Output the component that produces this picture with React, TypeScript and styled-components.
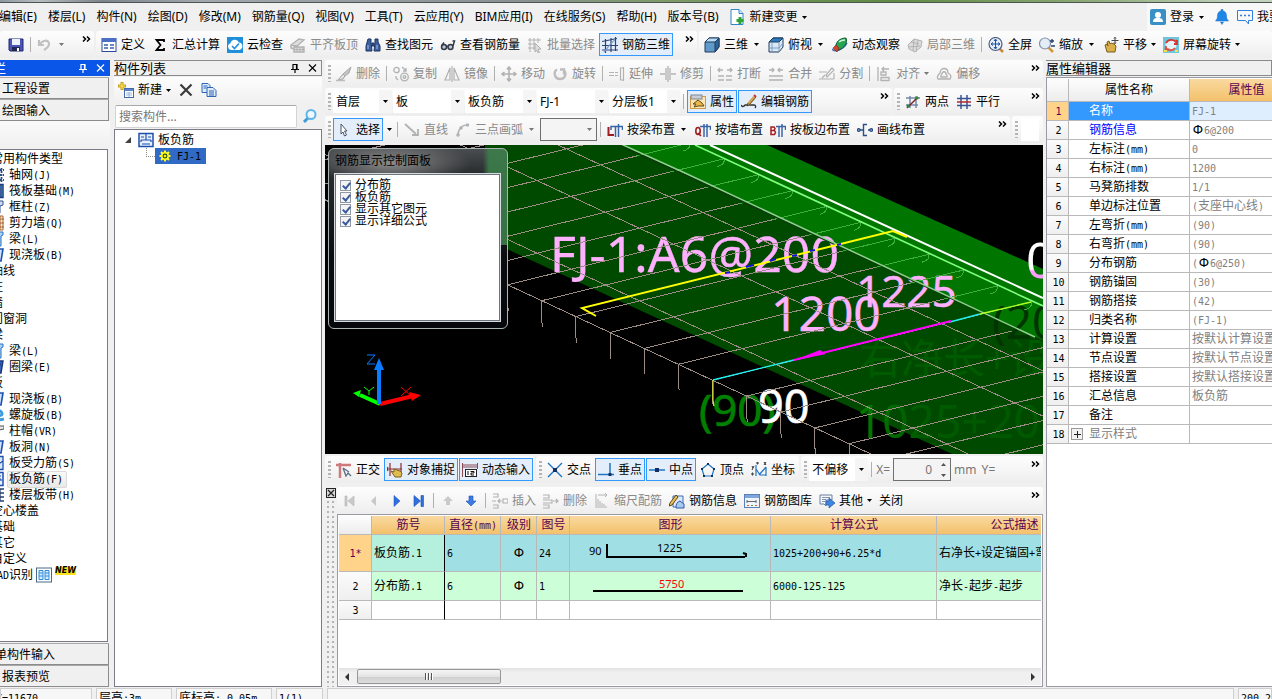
import React from 'react';
import styled, { createGlobalStyle, css } from 'styled-components';

const GlobalStyle = createGlobalStyle`
  * { box-sizing: border-box; }
  html, body { margin: 0; background: #f0f0f0; overflow: hidden; }
  body, button, input, select {
    font-family: "Noto Sans", "Noto Sans CJK SC", sans-serif;
    font-size: 12px;
    line-height: 16px;
    color: #000;
  }
  button { border: 0; background: none; padding: 0; margin: 0; }
  table { border-collapse: separate; border-spacing: 0; table-layout: fixed; }
`;

/* ---------- text helpers ---------- */

const MonoRun = styled.span`
  font-family: "DejaVu Sans Mono", "Liberation Mono", monospace;
  font-size: 10px;
`;
const PhiRun = styled.span`
  display: inline-block;
  width: 12px;
  text-align: center;
  color: #000;
  font-family: "DejaVu Sans", sans-serif;
  font-size: 12px;
  line-height: 12px;
`;

/* Latin runs take half the width of a Chinese character, as in a fixed-pitch form font. */
function Mixed({ children }: { children: string }) {
  const parts = children.split(/([\x20-\x7e]+|Φ)/).filter(Boolean);
  return (
    <>
      {parts.map((p, i) =>
        p === 'Φ' ? <PhiRun key={i}>Ф</PhiRun> : /^[\x20-\x7e]/.test(p) ? <MonoRun key={i}>{p}</MonoRun> : <span key={i}>{p}</span>,
      )}
    </>
  );
}

/* ---------- icons ---------- */

const G = '#b2b2b2';
const B = '#2b4f86';

const icons: Record<string, React.ReactNode> = {
  save: (
    <g>
      <path d="M1 2h14v12H2l-1-1z" fill="#4a55b8" stroke="#23296e" />
      <rect x="4" y="2" width="8" height="6" fill="#eef2ff" />
      <rect x="4" y="10" width="8" height="4" fill="#20264f" />
      <rect x="9" y="11" width="2" height="3" fill="#fff" />
    </g>
  ),
  undo: <path d="M2 3v5h5M2.500 8C5 3 12 2 12 7c0 3-2 4-5 6" fill="none" stroke="#c0c0c0" strokeWidth="2.2" />,
  define: (
    <g>
      <rect x="1" y="1.500" width="14" height="13" fill="#fff" stroke="#2c4a9c" />
      <rect x="1" y="1" width="14" height="4" fill="#4a6fc4" />
      <path d="M3 8h4M3 11h4M9 8h4M9 11h4" stroke="#3c5cae" strokeWidth="1.500" />
    </g>
  ),
  sigma: <path d="M12 5V3H4.500L8.500 8l-4 5H12v-2" fill="none" stroke="#000" strokeWidth="1.800" />,
  cloud: (
    <g>
      <rect width="16" height="16" fill="#1f8fdc" />
      <path d="M4 13a3.500 3.500 0 0 1-.5-6.800A4.500 4.500 0 0 1 12 5.500a3.800 3.800 0 0 1 .3 7.500z" fill="#fff" />
      <path d="M5 9l2.500 2.500L12 6.500" fill="none" stroke="#1f8fdc" strokeWidth="1.600" />
    </g>
  ),
  flat: (
    <g fill="none" stroke={G}>
      <path d="M1 8l8-6 5 1-7 6zM1 8v3l3 1M4 15v-5h10v5z" strokeWidth="1.400" fill="#dedede" />
      <path d="M4 12.500h10M7 10v5M10 10v5M13 10v5" />
    </g>
  ),
  find: (
    <g fill="#3d5f9e" stroke="#1d3565">
      <path d="M3 2h3v3l1 9H1V9zM10 2h3v3l2 4v5H9l1-9z" />
      <path d="M7 6h2v3H7z" />
      <path d="M3 8v4M12 8v4" stroke="#9fc0f0" />
    </g>
  ),
  glasses: (
    <g fill="none" stroke="#333a44" strokeWidth="1.500">
      <circle cx="4" cy="10" r="2.500" fill="#b8c6d8" />
      <circle cx="10.500" cy="10" r="2.500" fill="#b8c6d8" />
      <path d="M6.500 9.500H8M13 9l1.500-5h-2M1.500 9L4 5.500" />
    </g>
  ),
  batch: (
    <g fill="none" stroke={G}>
      <path d="M1 3h13M1 7h7M1 11h7M3 1v14M7 1v12M11 1v5" />
      <path d="M8 6l6 6-3 .3 1.500 3-1.500.700-1.500-3L8 15z" fill="#ddd" />
    </g>
  ),
  rebar3d: (
    <g fill="none" stroke="#2b4472" strokeWidth="1.200">
      <path d="M0 4.500l15-3M0 8.500h16M0 13h16M3.500 2v14M9 1v14M13.500 0v14" />
      <path d="M2 15C6 11 8 6 13 3" stroke="#7a9bd6" />
    </g>
  ),
  cube: (
    <g stroke="#1e3a5c">
      <path d="M1 5l4-4h10v9l-4 5H1z" fill="#5f9acb" />
      <path d="M1 5l4-4h10l-4 4z" fill="#b8dcf4" />
      <path d="M11 5l4-4v9l-4 5z" fill="#2e6596" />
    </g>
  ),
  top: (
    <g stroke="#1e3a5c">
      <path d="M1 5l4-4h10v9l-4 5H1z" fill="#d8e8f6" />
      <path d="M1 5l4-4h10l-4 4z" fill="#2d7cc0" />
      <path d="M11 5v10M4 6v8M1 11h10M11 11l4-5" stroke="#7f9fc0" />
    </g>
  ),
  orbit: (
    <g>
      <path d="M0 12c3 4 12 0 15-6" fill="none" stroke="#4a70b8" strokeWidth="1.500" />
      <path d="M4 11C3 5 8 1 14 1c2 5-2 10-7 12z" fill="#25a552" stroke="#0d5d2b" />
      <path d="M7 5c2-2 4-2 6-2" stroke="#c8f5d4" strokeWidth="1.500" fill="none" />
      <path d="M1 11l3-3 3 3-2 4z" fill="#cf4630" stroke="#7d1d10" strokeWidth=".6" />
    </g>
  ),
  local3d: (
    <g fill="#dcdcdc" stroke={G}>
      <path d="M1 8l6-6 8 2-1 6-6 5-6-3z" />
      <path d="M4 5l8 2M7 2l-1 12M11 3L9 15M2 10l11-1" fill="none" />
    </g>
  ),
  full: (
    <g>
      <path d="M11 11l4 4" stroke="#c88a3a" strokeWidth="2.500" />
      <circle cx="7.500" cy="7" r="6.500" fill="#e6eef8" stroke="#4a5f80" strokeWidth="1.200" />
      <path d="M7.500 2.500v9M3 7h9M6 4l1.500-2L9 4M6 10l1.500 2L9 10M5 5.500L3 7l2 1.500M10 5.500L12 7l-2 1.500" stroke="#1f4f9c" fill="none" />
    </g>
  ),
  zoom: (
    <g>
      <path d="M9 10l5 5" stroke="#d09a3a" strokeWidth="2.500" />
      <circle cx="6" cy="6.500" r="5.500" fill="#e4edf7" stroke="#8492a8" strokeWidth="1.200" />
      <path d="M13 2v4M11 4h4M12 9h4" stroke="#24406e" strokeWidth="1.300" />
    </g>
  ),
  pan: (
    <g>
      <path d="M2 8l2-1 1 2-1-4 2-1 1 3 1-1 3 1 2 2-1 6H4z" fill="#d9b04a" stroke="#7a5c1c" />
      <path d="M12 0v7M8.500 3.500h7M11 1.500l1-1 1 1M11 5.500l1 1 1-1" stroke="#444" fill="none" />
    </g>
  ),
  screenRot: (
    <g>
      <rect width="16" height="16" fill="#6ec6de" />
      <circle cx="8" cy="8" r="5.500" fill="#fff" opacity=".8" />
      <path d="M3 6c2-4 8-4 10-1l1-2M14 3v4h-3" fill="none" stroke="#d8342c" strokeWidth="1.800" />
      <path d="M12 11c-2 3-7 3-9 0M3 9l-.5 4 4-1" fill="none" stroke="#e0503c" strokeWidth="1.800" />
      <path d="M1 13h3v2H1zM12 13h3v2h-3z" fill="#f2e14a" />
    </g>
  ),
  newdoc: (
    <g>
      <path d="M1 .500h8l4 4v11H1z" fill="#fff" stroke="#2d86c8" />
      <path d="M9 .500v4h4" fill="#cbe6f8" stroke="#2d86c8" />
      <path d="M10 8v7M6.500 11.500h7" stroke="#2ea336" strokeWidth="3" />
    </g>
  ),
  user: (
    <g>
      <rect width="16" height="16" rx="2" fill="#3a8fc4" />
      <circle cx="8" cy="6" r="3" fill="#fff" />
      <path d="M3 13c0-4 3-4 5-4s5 0 5 4z" fill="#fff" />
    </g>
  ),
  bell: <path d="M7 .500h2V2c3 .5 3.500 3 3.500 5s.5 3 2 5h-13c1.500-2 2-3 2-5S4 2.500 7 2zM6.500 13h3L8 15.500z" fill="#1f86e8" stroke="#1f6fc8" strokeWidth=".5" />,
  chat: (
    <g fill="none" stroke="#2f7fe0">
      <path d="M.500 1.500h15v10h-4v3.500l-3-3.500h-8z" />
      <path d="M3 6.500h2M7 6.500h2M11 6.500h2" strokeWidth="1.500" />
    </g>
  ),
  brush: (
    <g>
      <path d="M15 1l-2 6-4 3-2-2z" fill="#c4c4c4" stroke="#a8a8a8" />
      <path d="M7 8l2 2-2 3-5 1z" fill="#e0e0e0" stroke="#a8a8a8" />
      <path d="M0 14.500h9" stroke="#bcbcbc" strokeWidth="1.500" />
    </g>
  ),
  copyShape: (
    <g fill="none" stroke={G} strokeWidth="1.300">
      <circle cx="3.500" cy="4" r="2.700" />
      <circle cx="11.500" cy="11" r="3.800" />
      <circle cx="11.500" cy="11" r="1.300" />
      <path d="M9 1l4 3.500M13 2v3h-3M3 10v2l2 2" />
    </g>
  ),
  mirror: <path d="M6 2v12H1zM10 2v12h5zM8 0v16" fill="none" stroke={G} strokeWidth="1.200" />,
  move: <path d="M8 1v14M1 8h14M6 3.500L8 1l2 2.500M6 12.500L8 15l2-2.500M3.500 6L1 8l2.500 2M12.500 6L15 8l-2.500 2" fill="none" stroke={G} strokeWidth="1.600" />,
  rotate: <path d="M5 3.500C1 6 2.500 13 8 13s7-6 3.500-9M12 8.500V3.500H8" fill="none" stroke="#bdbdbd" strokeWidth="2.400" />,
  extend: <path d="M0 6.500h5M0 9.500h5M6 6.500h3M6 9.500h3M11.500 2v12M14.500 1v14M11 2h4M11 14h4" fill="none" stroke={G} strokeWidth="1.200" />,
  trim: <path d="M0 8h5M11 8h5M6 2v12M10 2v12M8 0v16" fill="none" stroke={G} strokeWidth="1.300" />,
  breakIcon: <path d="M1 4h5M3 2L1 4l2 2M10 4h5M13 2l2 2-2 2M1 10h6M1 14h6M9 10h6M9 14h6" fill="none" stroke={G} strokeWidth="1.300" />,
  merge: <path d="M1 4h5M4 2l2 2-2 2M10 4h5M12 2l-2 2 2 2M1 10h14M1 14h14" fill="none" stroke={G} strokeWidth="1.300" />,
  splitIcon: <path d="M0 6h8M0 13h15M3 12l3-3M13 2l-6 7 1 2 7-7zM15 7v6" fill="none" stroke={G} strokeWidth="1.200" />,
  align: <path d="M2 1v14M5 6h5v3H5zM5 11.500h8v3H5zM13 3H6M8 1L6 3l2 2" fill="none" stroke={G} strokeWidth="1.300" />,
  offset: (
    <g fill="none" stroke={G} strokeWidth="1.300">
      <path d="M2 13c-2-3 1-5 2-6 0-6 8-6 8 0 2 1 4 3 2 6z" />
      <path d="M5 11c-1-2 1-2 1-3 0-3 4-3 4 0 0 1 2 1 1 3z" />
    </g>
  ),
  prop: (
    <g>
      <rect x=".500" y="2.500" width="15" height="12" fill="#fbe6b4" stroke="#d49b3e" />
      <rect x="1" y="1" width="11" height="4" fill="#c8ccd4" stroke="#7d8798" />
      <path d="M3 10l5-4 4 3 2 3H8l-4 1 2-3z" fill="#e9b949" stroke="#5f4a1c" />
    </g>
  ),
  editRebar: (
    <g fill="none">
      <path d="M0 11c1 2 3 2 4 0h9c2 0 2 2 1 3" stroke="#333" strokeWidth="1.300" />
      <path d="M13.500 3L7 10.500" stroke="#d2a34a" strokeWidth="3" />
      <path d="M15 3L8 11l-2 1 1-3" stroke="#5d3b1e" strokeWidth=".8" />
      <path d="M13 1l2 2" stroke="#c33" strokeWidth="2" />
    </g>
  ),
  twoPoint: (
    <g fill="none">
      <path d="M5 2v12M11 2v12M1 4h14M1 11h12" stroke="#7387ad" strokeWidth="1.500" />
      <path d="M2 14L13 3" stroke="#7c2020" strokeWidth="1.500" />
      <circle cx="12" cy="4" r="1.500" fill="#2d8a2d" />
      <circle cx="3" cy="12" r="1.500" fill="#2d8a2d" />
    </g>
  ),
  parallel: (
    <g fill="none" strokeWidth="1.500">
      <path d="M5 1v14M11 1v14M1 11.500h14" stroke="#3a5590" />
      <path d="M1 8h14" stroke="#b02a2a" />
      <path d="M1 4.500h14" stroke="#3a5590" />
    </g>
  ),
  pointer: <path d="M5 2l6 7H8.500l2 4-2 1-1.500-4-2 2z" fill="#fff" stroke="#4a5568" />,
  lineTool: <path d="M1 2l11 10M14 7v6H8" fill="none" stroke={G} strokeWidth="1.800" />,
  arcTool: (
    <g fill="none" stroke={G} strokeWidth="1.600">
      <path d="M3 13C3 7 7 3 12 3" />
      <circle cx="3" cy="13" r="1" />
      <circle cx="12.500" cy="3" r="1" />
      <circle cx="6" cy="6" r="1" />
    </g>
  ),
  beamL: (
    <g fill="none">
      <path d="M1.500 5v8H7" stroke="#a11c1c" strokeWidth="2" />
      <path d="M4 8V4.500h11.500V8M8.500 4v11M11.500 2v13" stroke="#3b64a8" strokeWidth="1.500" />
    </g>
  ),
  beamQ: (
    <g fill="none">
      <ellipse cx="3" cy="9" rx="2.200" ry="3.500" stroke="#a11c1c" strokeWidth="1.600" />
      <path d="M3 11l3 3" stroke="#a11c1c" strokeWidth="1.600" />
      <path d="M5 4.500h10.500V8M9 2v13M12 2v13" stroke="#3b64a8" strokeWidth="1.500" />
    </g>
  ),
  beamB: (
    <g fill="none">
      <path d="M1 5h3l1 1.500L4 8.500H1zM1 8.500h3.500l1 2-1 2H1z" stroke="#a11c1c" strokeWidth="1.500" />
      <path d="M6 4.500h9.500V8M9 4v11M12 2v13" stroke="#3b64a8" strokeWidth="1.500" />
    </g>
  ),
  drawLine: (
    <g fill="none" stroke="#2b4f86" strokeWidth="1.400">
      <circle cx="1.800" cy="8" r="1.300" />
      <circle cx="14.200" cy="8" r="1.300" />
      <path d="M3 8h3M11 8h2M10 2.500H6.500v11H10" />
    </g>
  ),
  ortho: (
    <g fill="none">
      <path d="M0 3h15M4 1v15" stroke="#cf7a7a" strokeWidth="2.500" />
      <path d="M7 6l3 8 2-3 3 3M7 6l6 4" stroke="#5c6e86" strokeWidth="1.300" />
    </g>
  ),
  snap: (
    <g fill="none">
      <path d="M3 1v13M14 1v9M0 7h15M1 5l-1 2 1 2" stroke="#8d2b2b" strokeWidth="1.200" />
      <path d="M4 9l3 1V7l6 2 2 2-1 4H8z" fill="#e0bc4e" stroke="#7c611e" />
    </g>
  ),
  dynIn: (
    <g fill="none">
      <path d="M.500 1v14M15.500 1v6M1 3h14M1 5h14" stroke="#8a4a55" />
      <rect x="3.500" y="7.500" width="11" height="7" fill="#fff" stroke="#222" />
      <path d="M6 9v4M8.500 9.500H12v1.500H9V13h3" stroke="#111" />
    </g>
  ),
  cross: (
    <g>
      <path d="M1 1l14 14M15 1L1 15" stroke="#1f74c4" strokeWidth="1.400" />
      <rect x="6" y="6" width="4" height="4" fill="#112f66" />
    </g>
  ),
  perp: (
    <g>
      <path d="M0 12.500h16M12 1v11" stroke="#1f74c4" strokeWidth="1.500" />
      <rect x="10.500" y="11" width="3" height="3" fill="#112f66" />
    </g>
  ),
  mid: (
    <g>
      <path d="M0 8h16" stroke="#1f74c4" strokeWidth="1.500" />
      <rect x="6" y="6" width="4" height="4" fill="#112f66" />
    </g>
  ),
  vertex: (
    <g>
      <path d="M8 2l6 5-2 7H4L2 7z" fill="none" stroke="#1f74c4" strokeWidth="1.200" />
      <path d="M7 1h2v2H7zM13 6h2v2h-2zM1 6h2v2H1zM3 13h2v2H3zM11 13h2v2h-2z" fill="#112f66" />
    </g>
  ),
  coord: (
    <g fill="none" stroke="#1f74c4">
      <path d="M5 3v11M8 13l7-8M15 5v9M5 7l4 6M9 13h6" strokeWidth="1.200" />
      <path d="M13 0l2 3M15 0l-2 3M1 4l1 2M3 4L1 8M1 11h1v2H1zM6 0h1v2H6z" stroke="#333" />
    </g>
  ),
  first: <path d="M3 3h2v10H3zM12 3L6 8l6 5z" fill="#cacaca" stroke="#b4b4b4" strokeWidth=".6" />,
  prev: <path d="M11 3L6 8l5 5z" fill="#c8c8c8" />,
  next: <path d="M6 2.500L12 8l-6 5.500z" fill="#2f6fe0" stroke="#1c4fb4" strokeWidth=".5" />,
  last: <path d="M3 2.500L9.500 8 3 13.500zM10 2.500h2.500v11H10z" fill="#2f6fe0" stroke="#1c4fb4" strokeWidth=".6" />,
  up: <path d="M8 3l5 5h-3v4H6V8H3z" fill="#cacaca" />,
  down: <path d="M8 13l5-5h-3V3H6v5H3z" fill="#3b7be6" stroke="#1e50b0" strokeWidth=".6" />,
  insert: <path d="M1 1h5v3H1M1 12h5v3H1M0 8h4M6 8h4M8 6L6 8l2 2M11 6h5v4h-5z" fill="none" stroke={G} strokeWidth="1.200" />,
  remove: <path d="M0 2h6v3H0M0 7h9v3H0M0 12h6v3H0M10 8h5M13 6l2 2-2 2" fill="none" stroke={G} strokeWidth="1.200" />,
  scaleBar: <path d="M2 1v14M4 2h9M11 0l2 2-2 2M4 6v9M6 8v7M8 10v5M10 11v4M12 13v2" fill="none" stroke={G} />,
  info: (
    <g>
      <path d="M4 3h10v11H4z" fill="#dbe8f8" stroke="#3f6fb4" />
      <path d="M7 15c0-4 1-6 4-7l4 3v4z" fill="#a8c8ee" stroke="#2f5da8" />
      <path d="M1 10L7 2l2 2-6 8-3 1z" fill="#e9c25a" stroke="#5f4413" />
    </g>
  ),
  library: (
    <g>
      <rect x=".500" y="1.500" width="15" height="13" fill="#eef4fc" stroke="#5b7fb8" />
      <rect x="1" y="2" width="14" height="3" fill="#7fa6dc" />
      <path d="M3 10V7M3 8.500h9v1.500M12 7v2" stroke="#666" fill="none" />
      <path d="M3 12.500h2M11 12.500h2" stroke="#d05a3a" />
      <path d="M7 12.500h2" stroke="#5aa04a" />
    </g>
  ),
  other: (
    <g>
      <path d="M1 2h12v5H7v6l-2-2H1z" fill="#f3f6fb" stroke="#6c7f9c" />
      <path d="M3 4.500h8M3 6.500h4M3 8.500h3" stroke="#8898b0" />
      <path d="M7 8h3V5l6 5-6 5v-3H7z" fill="#3f86e0" stroke="#1f56a8" strokeWidth=".7" />
    </g>
  ),
  create: (
    <g>
      <path d="M4 0v8M0 4h8" stroke="#c8a018" strokeWidth="3" />
      <path d="M4 1v6M1 4h6" stroke="#ffe95a" />
      <rect x="6.500" y="6.500" width="9" height="9" fill="#fff" stroke="#4668a8" />
      <rect x="7" y="7" width="8" height="2" fill="#5a86cf" />
      <path d="M8 11h6M8 13h6M11 10v5" stroke="#9db6dd" />
    </g>
  ),
  del: <path d="M2.500 2.500l11 11M13.500 2.500l-11 11" stroke="#3b3b3b" strokeWidth="2.200" />,
  dup: (
    <g fill="#dcecfb" stroke="#2f64b4">
      <path d="M1 1.500h6l2 2v7H1z" />
      <path d="M6 5.500h6l3 3v6H6z" />
      <path d="M2.500 4h4M2.500 6h3M8 9h5M8 11h5M8 13h5" />
    </g>
  ),
  search: (
    <g fill="none">
      <path d="M6 10l-4 4" stroke="#3b9bdc" strokeWidth="3" />
      <circle cx="9" cy="6.500" r="4.500" stroke="#62b4ea" strokeWidth="2" fill="#eef8ff" />
    </g>
  ),
  slab: (
    <g>
      <rect x="1" y="1.500" width="14" height="13" fill="#e7f0fd" stroke="#1f4fae" strokeWidth="1.500" />
      <path d="M8 2v6M3 8h10M3 8v2M13 8v2M4 12h8M3 5h3M10 5h3" stroke="#1f4fae" strokeWidth="1.200" fill="none" />
    </g>
  ),
  gear: (
    <g stroke="#ffff20" fill="none">
      <path d="M8 2.500v11M2.500 8h11M4 4l8 8M12 4l-8 8" strokeWidth="2" />
      <circle cx="8" cy="8" r="3.200" fill="#1d3c12" strokeWidth="1.500" />
      <circle cx="8" cy="8" r="1" fill="#ffff20" />
    </g>
  ),
  axis: <path d="M0 3h16M0 8h16M0 13h16M4 1v14M13.500 1v14" fill="none" stroke={B} strokeDasharray="2 1" strokeWidth="1.800" />,
  raft: <path d="M1 1.500h14v13H1zM4 5h8M4 8h8M4 11h8M13 2v12" fill="#9cc6f2" stroke="#173f7e" strokeWidth="1.500" />,
  column: <path d="M2 2h13v4l-3 1v7H6V7L2 6z" fill="#cfdcf0" stroke="#33558f" />,
  wall: <path d="M4 1h11v14H4zM12 4h4M12 8h4M12 12h4M12 1v14" fill="#f7ead8" stroke="#a8622a" />,
  beam: <path d="M4 5l4-4h7v3l-2 1v10H8V6z" fill="#a9d4f8" stroke="#2a6fc0" />,
  floor: <path d="M5 2h10l-2 12H2z" fill="#cfe4fb" stroke="#1d50b0" strokeWidth="1.600" />,
  ring: <path d="M5 2h10l-2 12H2zM8 5h4l-2 6H7z" fill="#3a62b8" stroke="#16347c" strokeWidth="1.400" />,
  spiral: <path d="M2 4c5-4 12 0 12 3s-8 1-8 3 5 4 10 2" fill="none" stroke="#3d9be0" strokeWidth="3" />,
  cap: <path d="M1 3h15v3l-5 1v7H6V7L1 6z" fill="#e6e6e6" stroke="#555" />,
  bars: <path d="M1 1.500h14v13H1zM4 6l5 4 6-4" fill="#d8e8fb" stroke="#1f4fae" strokeWidth="1.300" />,
  band: <path d="M1 2h15M4 2v12M12 2v12M4 6h12M4 10h12M1 14h15" fill="none" stroke="#27406e" strokeWidth="1.300" />,
  cad: (
    <g>
      <rect x=".500" y="1" width="15" height="14" fill="#fff" stroke="#4a6a86" />
      <path d="M3 3.500h4v9H3zM9 3.500h4v9H9zM3 6h4M3 9h4M9 6h4M9 9h4" fill="#d6ecff" stroke="#2f8bd8" />
    </g>
  ),
};

const IconSvg = styled.svg`
  flex: none;
  display: block;
`;
const Icon = ({ name }: { name: string }) => (
  <IconSvg width="16" height="16" viewBox="0 0 16 16" aria-hidden="true">
    {icons[name]}
  </IconSvg>
);
const Triangle = ({ dim }: { dim?: boolean }) => (
  <IconSvg width="5" height="3" viewBox="0 0 5 3" aria-hidden="true">
    <path d="M0 0h5L2.500 3z" fill={dim ? '#777' : '#000'} />
  </IconSvg>
);

/* ---------- toolbars ---------- */

const Row = styled.div<{ $flush?: boolean }>`
  display: flex;
  gap: 2px;
  height: 27px;
  flex: none;
  margin-bottom: ${(p) => (p.$flush ? 0 : 1)}px;
`;
const Bar = styled.div<{ $grow?: boolean; $w?: number; $lead?: number }>`
  display: flex;
  align-items: center;
  gap: 1px;
  min-width: 0;
  flex: ${(p) => (p.$grow ? '1 1 0' : p.$w ? `0 0 ${p.$w}px` : 'none')};
  padding: 0 1px 0 ${(p) => p.$lead ?? 2}px;
  overflow: hidden;
  border-radius: 3px;
  background: linear-gradient(#fdfdfd, #f6f6f6 50%, #ededed);
`;
const Grip = styled.span`
  flex: none;
  width: 3px;
  height: 17px;
  margin: 0 1px;
  background: repeating-linear-gradient(#b4b4b4 0 2px, transparent 2px 4px);
`;
const Divider = styled.span`
  flex: none;
  width: 1px;
  height: 15px;
  margin: 0 2px;
  background: #b0b0b0;
`;
const BlankField = styled.span`
  flex: 1;
  height: 23px;
  margin: 0 3px 0 1px;
  background: #fff;
`;
const ToolBtn = styled.button<{ $on?: boolean; $arrow?: 'wide' | 'narrow' }>`
  flex: none;
  display: flex;
  align-items: center;
  gap: 4px;
  height: 23px;
  padding: 0 ${(p) => (p.$arrow ? 0 : 3)}px 0 3px;
  white-space: nowrap;
  &:disabled { color: #8a8a8a; }
  ${(p) =>
    p.$on &&
    css`
      background: #e3eefa;
      box-shadow: inset 0 0 0 1px #3399ff;
    `}
`;
const ArrowBox = styled.span<{ $wide?: boolean }>`
  display: flex;
  justify-content: center;
  width: ${(p) => (p.$wide ? 16 : 12)}px;
  margin-left: -4px;
`;
const LoneArrow = styled.button`
  flex: none;
  display: flex;
  align-items: center;
  justify-content: center;
  width: 10px;
  height: 23px;
`;
const MoreBtn = styled.button`
  flex: none;
  align-self: flex-start;
  margin: 5px 2px 0 auto;
  display: block;
`;
const More = () => (
  <MoreBtn aria-label="更多">
    <IconSvg width="9" height="6" viewBox="0 0 9 6" aria-hidden="true">
      <path d="M1 .500L3.500 3 1 5.500M5 .500L7.500 3 5 5.500" fill="none" stroke="#000" strokeWidth="1.500" />
    </IconSvg>
  </MoreBtn>
);

interface ToolProps {
  icon?: string;
  label?: string;
  title?: string;
  on?: boolean;
  off?: boolean;
  arrow?: 'wide' | 'narrow';
}
const Tool = ({ icon, label, title, on, off, arrow }: ToolProps) => (
  <ToolBtn $on={on} $arrow={arrow} disabled={off} aria-label={label ?? title}>
    {icon && <Icon name={icon} />}
    {label && <span>{label}</span>}
    {arrow && (
      <ArrowBox $wide={arrow === 'wide'}>
        <Triangle dim={off} />
      </ArrowBox>
    )}
  </ToolBtn>
);

const PickWrap = styled.span<{ $w: number; $boxed?: boolean }>`
  flex: none;
  display: flex;
  align-items: center;
  position: relative;
  width: ${(p) => p.$w}px;
  height: 23px;
  background: ${(p) => (p.$boxed ? '#f4f4f4' : 'linear-gradient(90deg, #fff calc(100% - 13px), #f5f5f5 calc(100% - 13px))')};
  border: ${(p) => (p.$boxed ? '1px solid #6e6e6e' : '0')};
  & > svg { position: absolute; right: 4px; pointer-events: none; }
  & > select {
    appearance: none;
    width: 100%;
    height: 100%;
    border: 0;
    padding: 0 12px 0 3px;
    background: transparent;
  }
`;
const Pick = ({ value, label, w, boxed }: { value: string; label: string; w: number; boxed?: boolean }) => (
  <PickWrap $w={w} $boxed={boxed}>
    <select aria-label={label} defaultValue={value}>
      <option>{value}</option>
    </select>
    <Triangle dim={boxed} />
  </PickWrap>
);

/* ---------- page frame ---------- */

const Shell = styled.div`
  display: flex;
  flex-direction: column;
  height: 100vh;
  overflow: hidden;
  background: #f0f0f0;
`;
const DesktopStrip = styled.div`
  flex: none;
  height: 3px;
  border-bottom: 1px solid #4c5650;
  background: linear-gradient(90deg, #8f97a0, #b8bcc0 3%, #7d848c 8%, #a2a8ae 16%, #8b9095 40%, #7d9a68 52%, #5f8a44 70%, #87a56f 84%, #c4d3c0 98%);
`;
const MenuBar = styled.nav`
  flex: none;
  display: flex;
  align-items: center;
  height: 28px;
  overflow: hidden;
  margin-left: -6px;
`;
const MenuItem = styled.button`
  flex: none;
  display: flex;
  align-items: center;
  gap: 4px;
  padding: 0 6px 0 5px;
  height: 24px;
  white-space: nowrap;
`;
const Account = styled.div`
  flex: none;
  display: flex;
  align-items: center;
  gap: 1px;
  margin: 0 -12px 0 auto;
  height: 28px;
  background: #f8f8f8;
`;
const Main = styled.div`
  flex: 1;
  min-height: 0;
  display: flex;
  gap: 3px;
  padding-bottom: 1px;
`;
const PanelTitle = styled.header<{ $active?: boolean }>`
  flex: none;
  display: flex;
  align-items: center;
  justify-content: space-between;
  height: 16px;
  margin: 1px 0;
  font-size: 13px;
  line-height: 14px;
  white-space: nowrap;
  overflow: hidden;
  border: 1px solid ${(p) => (p.$active ? '#0a56e8' : '#8a8a8a')};
  border-left: 0;
  background: ${(p) => (p.$active ? '#0a56e8' : '#f0f0f0')};
  color: ${(p) => (p.$active ? '#fff' : '#000')};
`;
const TitleButtons = styled.span`
  display: flex;
  gap: 8px;
  padding-right: 4px;
  & > button { color: inherit; display: block; }
`;
const PinClose = () => (
  <TitleButtons>
    <button aria-label="固定">
      <IconSvg width="10" height="10" viewBox="0 0 10 10">
        <path d="M3 1.500h4v5H3zM6.500 1v5M1 6.500h8M5 7v3" fill="none" stroke="currentColor" strokeWidth="1.200" />
      </IconSvg>
    </button>
    <button aria-label="关闭面板">
      <IconSvg width="9" height="10" viewBox="0 0 9 10">
        <path d="M1 1.500l7 7M8 1.500l-7 7" fill="none" stroke="currentColor" strokeWidth="1.100" />
      </IconSvg>
    </button>
  </TitleButtons>
);

/* ---------- navigation panel ---------- */

const NavPanel = styled.aside`
  flex: none;
  width: 110px;
  display: flex;
  flex-direction: column;
`;
const ClippedTitle = styled.span`
  margin-left: -59px;
`;
const NavButton = styled.button`
  flex: none;
  height: 21px;
  margin: 1px 1px 0 0;
  padding: 2px 0 0 2px;
  text-align: left;
  white-space: nowrap;
  border: solid #8c8c8c;
  border-width: 0 1px 1px 0;
  background: #f0f0f0;
  box-shadow: 0 -1px 0 #a8a8a8;
`;
const NavSpacer = styled.div`
  flex: none;
  height: 28px;
  background: linear-gradient(#fafafa, #f0f0f0);
`;
const NavTree = styled.ul`
  flex: 1;
  min-height: 0;
  margin: 0 2px 1px 0;
  padding: 1px 0 0;
  list-style: none;
  overflow: hidden;
  background: #fff;
  border: 1px solid #7c7c88;
  border-left: 0;
`;
const NavNode = styled.li<{ $leaf?: boolean }>`
  display: flex;
  align-items: center;
  gap: 3px;
  height: 16px;
  margin-left: ${(p) => (p.$leaf ? -12 : -9)}px;
  white-space: nowrap;
`;
const NodeText = styled.span<{ $on?: boolean }>`
  padding: 0 4px 0 2px;
  ${(p) =>
    p.$on &&
    css`
      background: linear-gradient(#fafafa, #e8e8e8);
      border-radius: 2px;
      box-shadow: inset 0 0 0 1px #dadada;
    `}
`;
const NewTag = styled.b`
  align-self: flex-start;
  font: italic 700 8px/8px "DejaVu Sans", sans-serif;
  background: #ffe21a;
`;

const navItems: { t: string; icon?: string; on?: boolean }[] = [
  { t: '常用构件类型' },
  { t: '轴网(J)', icon: 'axis' },
  { t: '筏板基础(M)', icon: 'raft' },
  { t: '框柱(Z)', icon: 'column' },
  { t: '剪力墙(Q)', icon: 'wall' },
  { t: '梁(L)', icon: 'beam' },
  { t: '现浇板(B)', icon: 'floor' },
  { t: '轴线' },
  { t: '柱' },
  { t: '墙' },
  { t: '门窗洞' },
  { t: '梁' },
  { t: '梁(L)', icon: 'beam' },
  { t: '圈梁(E)', icon: 'ring' },
  { t: '板' },
  { t: '现浇板(B)', icon: 'floor' },
  { t: '螺旋板(B)', icon: 'spiral' },
  { t: '柱帽(VR)', icon: 'cap' },
  { t: '板洞(N)', icon: 'floor' },
  { t: '板受力筋(S)', icon: 'bars' },
  { t: '板负筋(F)', icon: 'slab', on: true },
  { t: '楼层板带(H)', icon: 'band' },
  { t: '空心楼盖' },
  { t: '基础' },
  { t: '其它' },
  { t: '自定义' },
  { t: 'CAD识别' },
];

/* ---------- component list ---------- */

const ListPanel = styled.section`
  flex: none;
  width: 209px;
  padding-left: 1px;
  display: flex;
  flex-direction: column;
`;
const ListTools = styled.div`
  flex: none;
  display: flex;
  align-items: center;
  gap: 1px;
  height: 26px;
  padding-left: 1px;
  background: linear-gradient(#fdfdfd, #f0f0f0);
`;
const SearchRow = styled.label`
  flex: none;
  display: flex;
  align-items: center;
  gap: 5px;
  height: 26px;
  padding-left: 1px;
  & > input {
    flex: 1;
    min-width: 0;
    height: 23px;
    padding: 0 3px;
    border: 1px solid #d4d4d4;
    border-top-color: #a8a8a8;
    border-radius: 2px;
    background: #fff;
  }
  & > input::placeholder { color: #777; opacity: 1; }
  & > svg { margin-right: 4px; }
`;
const ListTree = styled.ul`
  flex: 1;
  min-height: 0;
  margin: 0;
  padding: 1px 0 0;
  list-style: none;
  background: #fff;
  border: 1px solid #7c7c88;
`;
const ParentNode = styled.li`
  display: flex;
  align-items: center;
  gap: 4px;
  height: 17px;
  padding-left: 9px;
`;
const ChildNode = styled.li`
  display: flex;
  align-items: center;
  height: 16px;
  padding-left: 31px;
`;
const DottedElbow = styled.span`
  width: 9px;
  height: 9px;
  margin-bottom: 8px;
  border-left: 1px dotted #888;
  border-bottom: 1px dotted #888;
`;
const Selected = styled.span`
  display: flex;
  align-items: center;
  gap: 4px;
  height: 16px;
  padding: 0 5px 0 2px;
  background: #316ac5;
`;

/* ---------- centre: model view ---------- */

const Center = styled.main`
  flex: 1;
  min-width: 0;
  margin-top: 1px;
  display: flex;
  flex-direction: column;
`;
const View = styled.div`
  position: relative;
  flex: 1;
  min-height: 0;
  margin: 1px 0 2px;
  overflow: hidden;
  background: #000;
`;
const Scene = styled.svg`
  display: block;
  width: 100%;
  height: 100%;
  font-family: "Noto Sans", "Noto Sans CJK SC", sans-serif;
`;
const Floating = styled.section`
  position: absolute;
  left: 3px;
  top: 3px;
  width: 180px;
  height: 181px;
  padding: 0 7px 7px 6px;
  display: flex;
  flex-direction: column;
  border: 1px solid #a9b4b4;
  border-radius: 6px;
  background:
    linear-gradient(90deg, transparent 154px, rgba(60, 125, 75, 0.9) 160px) 0 0 / 100% 96px no-repeat,
    radial-gradient(ellipse 80px 22px at 62px 14px, #8a8a8a, transparent) no-repeat,
    linear-gradient(#4a4d4f, #2a2d30 24px, #0c0d10 60%, #07080c);
`;
const FloatTitle = styled.h2`
  margin: 0;
  height: 25px;
  font-size: 12px;
  line-height: 24px;
  font-weight: 400;
`;
const CheckList = styled.div`
  flex: 1;
  padding: 4px 3px 0 4px;
  background: #fff;
  border: 1px solid #6c7480;
  outline: 1px solid #d8dce0;
  & > label { display: flex; align-items: center; gap: 4px; height: 12px; line-height: 12px; }
  input {
    appearance: none;
    position: relative;
    margin: 0;
    width: 11px;
    height: 11px;
    background: #f3f3f3;
    border: 1px solid #8f9aa6;
  }
  input:checked::after {
    content: "";
    position: absolute;
    left: 3px;
    top: 0;
    width: 3px;
    height: 6px;
    border: solid #3c5b9c;
    border-width: 0 2px 2px 0;
    transform: rotate(40deg);
  }
`;

const range = (a: number, b: number) => Array.from({ length: b - a + 1 }, (_, i) => a + i);
const near = (k: number): [number, number] => [216.7 + 34.15 * k, 155.7 + 15.9 * k];
const SPAN: [number, number] = [319, -78.3];
const at = (k: number, t: number): [number, number] => {
  const [x, y] = near(k);
  return [x + SPAN[0] * t, y + SPAN[1] * t];
};

function ModelScene() {
  return (
    <Scene viewBox="0 0 718 309" preserveAspectRatio="xMinYMin slice" role="img" aria-label="钢筋三维">
      <defs>
        <linearGradient id="fade" x1="0" x2="1" y1="0" y2="0">
          <stop offset="0" stopColor="#007c00" />
          <stop offset=".2" stopColor="#006a00" />
          <stop offset=".35" stopColor="#005a00" />
          <stop offset="1" stopColor="#005800" />
        </linearGradient>
        <linearGradient id="zero" x1="0" x2="0" y1="0" y2="1">
          <stop offset=".64" stopColor="#fff" />
          <stop offset=".68" stopColor="#ff9cff" />
        </linearGradient>
      </defs>
      <path d="M160 0H296L718 196V309H627L360 186 160 94z" fill="#004a00" />
      <path d="M296 0H442L718 124V196L360 29z" fill="#007600" />
      <text x="374" y="281" fontSize="44" fill="#008000" stroke="#008000" strokeWidth=".6">(90)</text>
      <text x="433" y="278" fontSize="45" fill="#fff" stroke="#fff" strokeWidth=".6">90</text>
      <text x="667" y="194" fontSize="46" fill="#003400">(20</text>
      <text x="534" y="229" fontSize="42" fill="#005a00">右净长+设</text>
      <text x="531" y="293" fontSize="46" fill="url(#fade)">1025+20</text>
      <g fill="#ffb0ff" stroke="#ffb0ff" strokeWidth=".4">
        <text x="225" y="127" fontSize="50">FJ-1:A6@200</text>
        <text x="446" y="186" fontSize="48">1200</text>
        <text x="531" y="162" fontSize="44">1225</text>
      </g>
      <text x="701" y="133" fontSize="50" fill="url(#zero)">0</text>
      <g shapeRendering="crispEdges" fill="none">
        <g stroke="#9a8b84">
          {range(-11, 14).map((k) => {
            const a = near(k);
            const b = at(k, 0.832);
            return <path key={k} d={`M${a[0]} ${a[1]}L${b[0]} ${b[1]}M${a[0]} ${a[1]}v20l1 6`} />;
          })}
          {[0, 0.2, 0.52, 0.72].map((t) => {
            const a = at(-12, t);
            const b = at(15, t);
            return <path key={t} d={`M${a[0]} ${a[1]}L${b[0]} ${b[1]}`} />;
          })}
        </g>
        <g stroke="#3fae3f">
          {range(-9, 5).map((k) => {
            const a = at(k, 0.832);
            const b = at(k, 1);
            return <path key={k} d={`M${a[0]} ${a[1]}L${b[0]} ${b[1]}q1 6-7 8`} />;
          })}
        </g>
      </g>
      <path d="M295 1L360 30 718 196" stroke="#0a3c0a" strokeWidth="1.500" fill="none" />
      <path d="M296-1L360 28 710 192" stroke="#8fd08f" strokeWidth="1.500" fill="none" />
      <path d="M370 0L718 161" stroke="#7dff7d" strokeWidth="1.600" />
      <path d="M385 0L718 153" stroke="#fff" strokeWidth="2" />
      <path d="M271 171l-14-8 311-77 14 6" fill="none" stroke="#ff0" strokeWidth="2" />
      <path d="M400 128l5-1M421 122l8-2M445 116l6-2M467 111l5-1M485 106l5-1M512 100l4-1" stroke="#1010e0" strokeWidth="2" />
      <g fill="none">
        <path d="M388 235l81-20M625 177l30-8" stroke="#20f0f0" strokeWidth="1.300" />
        <path d="M655 169l51-12" stroke="#b0ff20" strokeWidth="1.300" />
        <path d="M469 215l157-39" stroke="#f0f" strokeWidth="2" />
        <path d="M388 235v20l1 6" stroke="#ff0" />
      </g>
      <path d="M467 216l28-11 6 4z" fill="#f0f" />
      <g strokeWidth="4" fill="none">
        <path d="M55 259l-20-9" stroke="#0f0" />
        <path d="M55 259l33-8" stroke="#f00" />
        <path d="M54 259v-34" stroke="#0a7cff" />
      </g>
      <path d="M28 248l8-3-2 7z" fill="#0f0" />
      <path d="M84 247l12 3-9 6z" fill="#f00" />
      <path d="M49 225l5-12 5 12z" fill="#0a7cff" />
      <path d="M42 210h8l-8 9h8" fill="none" stroke="#0a7cff" />
      <path d="M39 242l5 4 5-4M44 246v4" fill="none" stroke="#0f0" />
      <path d="M76 242l10 9M86 242l-10 9" fill="none" stroke="#f00" />
    </Scene>
  );
}

/* ---------- rebar table ---------- */

const Dock = styled.div`
  flex: none;
  display: flex;
  margin-top: 3px;
`;
const DockEdge = styled.div`
  flex: none;
  width: 12px;
  display: flex;
  flex-direction: column;
  align-items: flex-start;
  & > button { display: block; margin: 1px 0 3px 1px; }
  &::after {
    content: "";
    flex: 1;
    width: 8px;
    margin-left: 2px;
    background: radial-gradient(circle at 1px 1px, #b4b4b4 1px, transparent 1px) 0 0 / 5px 5px;
  }
`;
const DockBody = styled.div`
  flex: 1;
  min-width: 0;
`;
const GridFrame = styled.div`
  display: flex;
  flex-direction: column;
  justify-content: space-between;
  height: 173px;
  padding: 1px;
  overflow: hidden;
  background: #fff;
  border: 1px solid #9a9aa2;
`;
const TableClip = styled.div`
  overflow: hidden;
`;
const RebarTable = styled.table`
  width: 753px;
  th, td {
    padding: 0 1px 0 2px;
    font-weight: 400;
    text-align: left;
    white-space: nowrap;
    overflow: hidden;
    border-right: 1px solid #b9b9b9;
    border-bottom: 1px solid #b9b9b9;
  }
  tbody td:nth-of-type(1) { border-right-color: #000; }
  td:nth-of-type(3) { text-align: center; }
`;
const HeadCell = styled.th<{ $plain?: boolean }>`
  && { text-align: center; }
  height: 19px;
  color: ${(p) => (p.$plain ? '#000' : '#5a0050')};
  background: ${(p) => (p.$plain ? 'linear-gradient(#fdfdfd, #ececec)' : 'linear-gradient(#f9d9a0, #f3c16b)')};
`;
const RowHead = styled.th<{ $on?: boolean }>`
  && { text-align: center; }
  color: ${(p) => (p.$on ? '#5a0050' : '#000')};
  background: ${(p) => (p.$on ? '#ffd48a' : 'linear-gradient(#fbfbfb, #efefef)')};
`;
const DataRow = styled.tr<{ $h: number; $bg?: string; $first?: string }>`
  height: ${(p) => p.$h}px;
  & > td { background: ${(p) => p.$bg ?? '#fff'}; }
  & > td:nth-of-type(1) { background: ${(p) => p.$first ?? p.$bg ?? '#fff'}; }
`;
const ShapeSvg = styled.svg`
  display: block;
  font-family: "Noto Sans", sans-serif;
  font-size: 11px;
`;
const HScroll = styled.div`
  display: flex;
  align-items: center;
  height: 17px;
  padding: 0 5px;
  gap: 8px;
  background: linear-gradient(#e2e2e2, #f0f0f0 4px);
  & > i { flex: 1; }
`;
const Thumb = styled.div`
  display: flex;
  align-items: center;
  justify-content: center;
  width: 144px;
  height: 15px;
  border: 1px solid #979797;
  border-radius: 2px;
  background: linear-gradient(#f5f5f5, #e4e4e4 50%, #cfcfcf 50%, #dcdcdc);
  &::after {
    content: "";
    width: 8px;
    height: 7px;
    background: repeating-linear-gradient(90deg, #555 0 1px, #fff 1px 2px, transparent 2px 3px);
  }
`;
const StepBtn = styled.button`
  display: block;
`;

const Unit = styled.label`
  flex: none;
  display: flex;
  align-items: center;
  gap: 3px;
  padding-left: 1px;
  color: #777;
  white-space: nowrap;
`;
const Spin = styled.span`
  display: flex;
  align-items: center;
  width: 58px;
  height: 23px;
  padding-right: 3px;
  background: #f4f4f4;
  border: 1px solid #707070;
  & > input {
    flex: 1;
    min-width: 0;
    border: 0;
    padding: 0 8px 0 0;
    background: transparent;
    text-align: right;
    color: #777;
  }
`;

/* ---------- property editor ---------- */

const PropPanel = styled.aside`
  flex: none;
  width: 226px;
  display: flex;
  flex-direction: column;
  overflow: hidden;
`;
const PropFrame = styled.div`
  flex: 1;
  padding: 1px 0 0 0;
  overflow: hidden;
  background: #fff;
  border: solid #9a9aa2;
  border-width: 1px 0 1px 1px;
`;
const PropTable = styled.table`
  width: 257px;
  th, td {
    height: 19px;
    padding: 0 0 0 2px;
    font-weight: 400;
    text-align: left;
    white-space: nowrap;
    border-right: 1px solid #b9b9b9;
    border-bottom: 1px solid #b9b9b9;
  }
  thead th { height: 23px; padding: 0; }
  td { color: #808080; }
`;
const NameCell = styled.th<{ $tone?: string }>`
  && { padding-left: 20px; }
  position: relative;
  color: ${(p) => (p.$tone === 'sel' ? '#fff' : p.$tone === 'key' ? '#0000ff' : p.$tone === 'dim' ? '#808080' : '#000')};
  background: ${(p) => (p.$tone === 'sel' ? '#3399ff' : '#fff')};
`;
const ValueCell = styled.td<{ $on?: boolean }>`
  background: ${(p) => (p.$on ? '#deeeff' : '#fff')};
`;
const Expander = styled.button`
  position: absolute;
  left: 2px;
  top: 3px;
  width: 12px;
  height: 12px;
  border: 1px solid #9a9a9a;
  background:
    linear-gradient(#222, #222) center / 7px 1px no-repeat,
    linear-gradient(#222, #222) center / 1px 7px no-repeat,
    #f2f2f2;
`;

const props: [string, string, string?][] = [
  ['名称', 'FJ-1', 'sel'],
  ['钢筋信息', 'Φ6@200', 'key'],
  ['左标注(mm)', '0'],
  ['右标注(mm)', '1200'],
  ['马凳筋排数', '1/1'],
  ['单边标注位置', '(支座中心线)'],
  ['左弯折(mm)', '(90)'],
  ['右弯折(mm)', '(90)'],
  ['分布钢筋', '(Φ6@250)'],
  ['钢筋锚固', '(30)'],
  ['钢筋搭接', '(42)'],
  ['归类名称', '(FJ-1)'],
  ['计算设置', '按默认计算设置'],
  ['节点设置', '按默认节点设置'],
  ['搭接设置', '按默认搭接设置'],
  ['汇总信息', '板负筋'],
  ['备注', ''],
  ['显示样式', '', 'dim'],
];

/* ---------- status bar ---------- */

const Status = styled.footer`
  flex: none;
  display: flex;
  gap: 4px;
  height: 11px;
  overflow: hidden;
`;
const StatusCell = styled.span<{ $w?: number }>`
  flex: ${(p) => (p.$w ? `0 0 ${p.$w}px` : '1')};
  height: 22px;
  padding: 1px 0 0 2px;
  line-height: 16px;
  white-space: nowrap;
  overflow: hidden;
  border: 1px solid #cfcfcf;
  background: #f7f7f7;
`;
const Pulled = styled.span`
  margin-left: -7px;
`;

const menus = ['编辑(E)', '楼层(L)', '构件(N)', '绘图(D)', '修改(M)', '钢筋量(Q)', '视图(V)', '工具(T)', '云应用(Y)', 'BIM应用(I)', '在线服务(S)', '帮助(H)', '版本号(B)'];

export default function App() {
  return (
    <Shell>
      <GlobalStyle />
      <DesktopStrip />
      <MenuBar>
        {menus.map((m) => (
          <MenuItem key={m}>{m}</MenuItem>
        ))}
        <MenuItem>
          <Icon name="newdoc" />
          新建变更
          <Triangle />
        </MenuItem>
        <Account>
          <Tool icon="user" label="登录" arrow="wide" />
          <Tool icon="bell" title="消息" />
          <Tool icon="chat" label="我要" />
        </Account>
      </MenuBar>

      <Row>
        <Bar $w={94} $lead={5}>
          <Tool icon="save" title="保存" />
          <Divider />
          <Tool icon="undo" title="撤销" arrow="wide" off />
          <More />
        </Bar>
        <Bar $w={601}>
          <Tool icon="define" label="定义" />
          <Tool icon="sigma" label="汇总计算" />
          <Tool icon="cloud" label="云检查" />
          <Tool icon="flat" label="平齐板顶" off />
          <Tool icon="find" label="查找图元" />
          <Tool icon="glasses" label="查看钢筋量" />
          <Tool icon="batch" label="批量选择" off />
          <Tool icon="rebar3d" label="钢筋三维" on />
          <More />
        </Bar>
        <Bar $grow>
          <Tool icon="cube" label="三维" arrow="wide" />
          <Tool icon="top" label="俯视" arrow="wide" />
          <Tool icon="orbit" label="动态观察" />
          <Tool icon="local3d" label="局部三维" off />
          <Divider />
          <Tool icon="full" label="全屏" />
          <Tool icon="zoom" label="缩放" arrow="wide" />
          <Tool icon="pan" label="平移" arrow="narrow" />
          <Tool icon="screenRot" label="屏幕旋转" arrow="narrow" />
        </Bar>
      </Row>

      <Main>
        <NavPanel>
          <PanelTitle $active>
            <ClippedTitle>模块导航栏</ClippedTitle>
            <PinClose />
          </PanelTitle>
          <NavButton>工程设置</NavButton>
          <NavButton>绘图输入</NavButton>
          <NavSpacer />
          <NavTree>
            {navItems.map((n, i) => (
              <NavNode key={i} $leaf={!!n.icon}>
                {n.icon ? (
                  <>
                    <Icon name={n.icon} />
                    <NodeText $on={n.on}>
                      <Mixed>{n.t}</Mixed>
                    </NodeText>
                  </>
                ) : (
                  <span>
                    <Mixed>{n.t}</Mixed>
                  </span>
                )}
                {n.t === 'CAD识别' && (
                  <>
                    <Icon name="cad" />
                    <NewTag>NEW</NewTag>
                  </>
                )}
              </NavNode>
            ))}
          </NavTree>
          <NavButton>
            <Pulled>单构件输入</Pulled>
          </NavButton>
          <NavButton>报表预览</NavButton>
        </NavPanel>

        <ListPanel>
          <PanelTitle>
            <span>构件列表</span>
            <PinClose />
          </PanelTitle>
          <ListTools>
            <Tool icon="create" label="新建" arrow="narrow" />
            <Tool icon="del" title="删除构件" />
            <Tool icon="dup" title="复制构件" />
          </ListTools>
          <SearchRow>
            <input type="text" placeholder="搜索构件..." aria-label="搜索构件" />
            <Icon name="search" />
          </SearchRow>
          <ListTree>
            <ParentNode>
              <IconSvg width="10" height="8" viewBox="0 0 10 8">
                <path d="M1 7l6-6v6z" fill="#404040" />
              </IconSvg>
              <Icon name="slab" />
              <span>板负筋</span>
            </ParentNode>
            <ChildNode>
              <DottedElbow />
              <Selected>
                <Icon name="gear" />
                <span>
                  <Mixed>FJ-1</Mixed>
                </span>
              </Selected>
            </ChildNode>
          </ListTree>
        </ListPanel>

        <Center>
          <Row>
            <Bar $grow>
              <Grip />
              <Tool icon="brush" label="删除" off />
              <Divider />
              <Tool icon="copyShape" label="复制" off />
              <Tool icon="mirror" label="镜像" off />
              <Divider />
              <Tool icon="move" label="移动" off />
              <Tool icon="rotate" label="旋转" off />
              <Divider />
              <Tool icon="extend" label="延伸" off />
              <Tool icon="trim" label="修剪" off />
              <Divider />
              <Tool icon="breakIcon" label="打断" off />
              <Tool icon="merge" label="合并" off />
              <Tool icon="splitIcon" label="分割" off />
              <Divider />
              <Tool icon="align" label="对齐" off arrow="narrow" />
              <Tool icon="offset" label="偏移" off />
              <More />
            </Bar>
          </Row>
          <Row>
            <Bar $grow>
              <Grip />
              <Pick w={59} label="楼层" value="首层" />
              <Pick w={71} label="构件类别" value="板" />
              <Pick w={71} label="构件类型" value="板负筋" />
              <Pick w={71} label="构件名称" value="FJ-1" />
              <Pick w={71} label="分层" value="分层板1" />
              <Divider />
              <Tool icon="prop" label="属性" on />
              <Tool icon="editRebar" label="编辑钢筋" on />
              <More />
            </Bar>
            <Bar $w={149}>
              <Grip />
              <Tool icon="twoPoint" label="两点" />
              <Tool icon="parallel" label="平行" />
              <More />
            </Bar>
          </Row>
          <Row>
            <Bar $grow>
              <Grip />
              <Tool icon="pointer" label="选择" on />
              <LoneArrow aria-label="选择方式">
                <Triangle />
              </LoneArrow>
              <Divider />
              <Tool icon="lineTool" label="直线" off />
              <Tool icon="arcTool" label="三点画弧" off arrow="wide" />
              <Pick w={57} label="画弧参数" value="" boxed />
              <Divider />
              <Tool icon="beamL" label="按梁布置" arrow="wide" />
              <Tool icon="beamQ" label="按墙布置" />
              <Tool icon="beamB" label="按板边布置" />
              <Tool icon="drawLine" label="画线布置" />
              <More />
            </Bar>
            <Bar $w={31}>
              <Grip />
              <BlankField />
            </Bar>
          </Row>

          <View>
            <ModelScene />
            <Floating>
              <FloatTitle>钢筋显示控制面板</FloatTitle>
              <CheckList>
                {['分布筋', '板负筋', '显示其它图元', '显示详细公式'].map((t) => (
                  <label key={t}>
                    <input type="checkbox" defaultChecked />
                    {t}
                  </label>
                ))}
              </CheckList>
            </Floating>
          </View>

          <Row>
            <Bar>
              <Grip />
              <Tool icon="ortho" label="正交" />
              <Tool icon="snap" label="对象捕捉" on />
              <Tool icon="dynIn" label="动态输入" on />
            </Bar>
            <Bar>
              <Grip />
              <Tool icon="cross" label="交点" />
              <Tool icon="perp" label="垂点" on />
              <Tool icon="mid" label="中点" on />
              <Tool icon="vertex" label="顶点" />
              <Tool icon="coord" label="坐标" />
            </Bar>
            <Bar $grow>
              <Grip />
              <Pick w={59} label="偏移方式" value="不偏移" />
              <Divider />
              <Unit>
                X=
                <Spin>
                  <input type="text" defaultValue="0" aria-label="X 偏移" />
                  <IconSvg width="7" height="16" viewBox="0 0 7 16">
                    <path d="M1 4l2.500-3L6 4zM1 12l2.500 3L6 12z" fill="#555" />
                  </IconSvg>
                </Spin>
                mm
              </Unit>
              <Unit>&nbsp;Y=</Unit>
              <More />
            </Bar>
          </Row>

          <Dock>
            <DockEdge>
              <button aria-label="关闭钢筋表">
                <IconSvg width="10" height="10" viewBox="0 0 10 10">
                  <rect x=".500" y=".500" width="9" height="9" fill="#d8d8d8" stroke="#222" />
                  <path d="M2 2l6 6M8 2L2 8" stroke="#222" strokeWidth="1.300" />
                </IconSvg>
              </button>
            </DockEdge>
            <DockBody>
              <Row $flush>
                <Bar $grow>
                  <Tool icon="first" title="首行" off />
                  <Tool icon="prev" title="上一行" off />
                  <Tool icon="next" title="下一行" />
                  <Tool icon="last" title="末行" />
                  <Divider />
                  <Tool icon="up" title="上移" off />
                  <Tool icon="down" title="下移" />
                  <Divider />
                  <Tool icon="insert" label="插入" off />
                  <Tool icon="remove" label="删除" off />
                  <Tool icon="scaleBar" label="缩尺配筋" off />
                  <Tool icon="info" label="钢筋信息" />
                  <Tool icon="library" label="钢筋图库" />
                  <Tool icon="other" label="其他" arrow="narrow" />
                  <Tool label="关闭" />
                  <More />
                </Bar>
              </Row>
              <GridFrame>
                <TableClip>
                  <RebarTable>
                    <colgroup>
                      {[33, 73, 56, 36, 33, 201, 166, 155].map((w, i) => (
                        <col key={i} width={w} />
                      ))}
                    </colgroup>
                    <thead>
                      <tr>
                        <HeadCell $plain />
                        {['筋号', '直径(mm)', '级别', '图号', '图形', '计算公式', '公式描述'].map((h) => (
                          <HeadCell key={h} scope="col">
                            <Mixed>{h}</Mixed>
                          </HeadCell>
                        ))}
                      </tr>
                    </thead>
                    <tbody>
                      <DataRow $h={37} $bg="#a0e0e5" $first="#b4f0dd">
                        <RowHead $on scope="row"><Mixed>1*</Mixed></RowHead>
                        <td><Mixed>板负筋.1</Mixed></td>
                        <td><Mixed>6</Mixed></td>
                        <td><Mixed>Φ</Mixed></td>
                        <td><Mixed>24</Mixed></td>
                        <td>
                          <ShapeSvg width="196" height="34" viewBox="0 0 196 34">
                            <path d="M35 8v13h138M171 17l3 1v3" fill="none" stroke="#000" strokeWidth="2" />
                            <text x="17" y="19">90</text>
                            <text x="85" y="16">1225</text>
                          </ShapeSvg>
                        </td>
                        <td><Mixed>1025+200+90+6.25*d</Mixed></td>
                        <td><Mixed>右净长+设定锚固+弯折</Mixed></td>
                      </DataRow>
                      <DataRow $h={29} $bg="#ccffd8">
                        <RowHead scope="row"><Mixed>2</Mixed></RowHead>
                        <td><Mixed>分布筋.1</Mixed></td>
                        <td><Mixed>6</Mixed></td>
                        <td><Mixed>Φ</Mixed></td>
                        <td><Mixed>1</Mixed></td>
                        <td>
                          <ShapeSvg width="196" height="28" viewBox="0 0 196 28">
                            <path d="M21 19h150" stroke="#000" strokeWidth="2" />
                            <text x="87" y="16" fill="#f00">5750</text>
                          </ShapeSvg>
                        </td>
                        <td><Mixed>6000-125-125</Mixed></td>
                        <td><Mixed>净长-起步-起步</Mixed></td>
                      </DataRow>
                      <DataRow $h={19}>
                        <RowHead scope="row"><Mixed>3</Mixed></RowHead>
                        <td /><td /><td /><td /><td /><td /><td />
                      </DataRow>
                    </tbody>
                  </RebarTable>
                </TableClip>
                <HScroll>
                  <StepBtn aria-label="向左">
                    <IconSvg width="5" height="8" viewBox="0 0 5 8"><path d="M5 0v8L1 4z" fill="#333" /></IconSvg>
                  </StepBtn>
                  <Thumb />
                  <i />
                  <StepBtn aria-label="向右">
                    <IconSvg width="5" height="8" viewBox="0 0 5 8"><path d="M0 0v8l4-4z" fill="#333" /></IconSvg>
                  </StepBtn>
                </HScroll>
              </GridFrame>
            </DockBody>
          </Dock>
        </Center>

        <PropPanel>
          <PanelTitle>
            <span>属性编辑器</span>
          </PanelTitle>
          <PropFrame>
            <PropTable>
              <colgroup>
                <col width="22" />
                <col width="121" />
                <col width="114" />
              </colgroup>
              <thead>
                <tr>
                  <HeadCell $plain />
                  <HeadCell $plain scope="col">属性名称</HeadCell>
                  <HeadCell scope="col">属性值</HeadCell>
                </tr>
              </thead>
              <tbody>
                {props.map(([name, value, tone], i) => (
                  <tr key={name}>
                    <RowHead $on={tone === 'sel'}>
                      <Mixed>{String(i + 1)}</Mixed>
                    </RowHead>
                    <NameCell $tone={tone} scope="row">
                      {tone === 'dim' && <Expander aria-label="展开" />}
                      <Mixed>{name}</Mixed>
                    </NameCell>
                    <ValueCell $on={tone === 'sel'}>
                      <Mixed>{value}</Mixed>
                    </ValueCell>
                  </tr>
                ))}
              </tbody>
            </PropTable>
          </PropFrame>
        </PropPanel>
      </Main>

      <Status>
        <StatusCell $w={92}>
          <Pulled>
            <Mixed>X=11670</Mixed>
          </Pulled>
        </StatusCell>
        <StatusCell $w={76}>
          <Mixed>层高:3m</Mixed>
        </StatusCell>
        <StatusCell $w={96}>
          <Mixed>底标高:-0.05m</Mixed>
        </StatusCell>
        <StatusCell $w={47}>
          <Mixed>1(1)</Mixed>
        </StatusCell>
        <StatusCell />
        <StatusCell $w={34}>
          <Mixed>200.2</Mixed>
        </StatusCell>
      </Status>
    </Shell>
  );
}
